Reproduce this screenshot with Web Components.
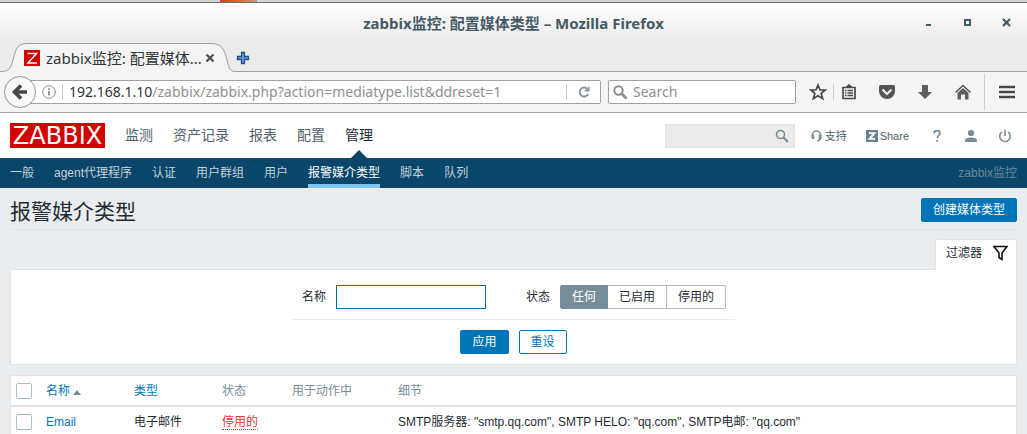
<!DOCTYPE html>
<html lang="zh-CN">
<head>
<meta charset="utf-8">
<title>zabbix监控: 配置媒体类型</title>
<style>
  html, body { margin: 0; height: 100%; overflow: hidden; }
  body { background: #e9edf0; font: 12px/18px "Liberation Sans", "Noto Sans CJK SC", sans-serif; color: #1f2c33; }
</style>
</head>
<body>
<browser-window>
  <title-bar>zabbix监控: 配置媒体类型 – Mozilla Firefox</title-bar>
  <tab-strip>zabbix监控: 配置媒体...</tab-strip>
  <nav-toolbar></nav-toolbar>
  <zbx-header></zbx-header>
  <zbx-subnav></zbx-subnav>
  <zbx-page>
    <zbx-title>报警媒介类型<zbx-button slot="action" primary>创建媒体类型</zbx-button></zbx-title>
    <zbx-filter></zbx-filter>
    <zbx-table></zbx-table>
  </zbx-page>
</browser-window>

<script>
function define(name, html) {
  const template = document.createElement('template');
  template.innerHTML = '<style>:host,*{box-sizing:border-box}svg{display:block;flex:none}button,input{font:inherit;color:inherit;margin:0}a{color:inherit;text-decoration:none}</style>' + html;
  customElements.define(name, class extends HTMLElement {
    constructor() {
      super();
      this.attachShadow({ mode: 'open' }).append(template.content.cloneNode(true));
    }
  });
}

define('browser-window', `
<style>
  :host { display: flex; flex-direction: column; min-height: 100vh; }
  .edge { height: 3px; background: #d6d6d6; border-bottom: 1px solid #6e6e6e; }
  .edge i { display: block; width: 37px; height: 2px; margin-left: 220px; background: linear-gradient(90deg, #d83a22, #e0642c 50%, #b5a08c); }
</style>
<div class="edge"><i></i></div>
<slot></slot>`);

define('title-bar', `
<style>
  :host { display: grid; grid-template-columns: 1fr auto 1fr; align-items: center; height: 40px;
    background: linear-gradient(#fff, #ebebeb 38px); color: #455a64;
    font: bold 15px/20px "Noto Sans", "Noto Sans CJK SC", sans-serif; }
  .title { grid-column: 2; }
  .controls { display: flex; justify-content: flex-end; gap: 25px; padding-right: 13px; }
  button { border: 0; background: none; padding: 0; width: 14px; height: 14px; }
</style>
<span class="title"><slot></slot></span>
<div class="controls">
  <button aria-label="Minimize"><svg width="14" height="14"><path d="M4 8h5v2H4z" fill="#455a64"/></svg></button>
  <button aria-label="Maximize"><svg width="14" height="14"><path d="M4 4h5v5H4z" fill="none" stroke="#455a64" stroke-width="2"/></svg></button>
  <button aria-label="Close"><svg width="14" height="14"><path d="M3 3l7 7M10 3l-7 7" stroke="#455a64" stroke-width="2.200"/></svg></button>
</div>`);

define('tab-strip', `
<style>
  :host { display: flex; height: 29px; background: linear-gradient(#ebebeb, #ebebeb 28px, #9f9f9f 28px); }
  .tab { position: relative; display: flex; align-items: center; width: 236px; height: 29px; padding-left: 24px; }
  .shape { position: absolute; inset: 0; }
  .tab > :not(.shape) { position: relative; }
  .fav { width: 16px; height: 16px; flex: none; }
  .text { width: 154px; margin-left: 6px; white-space: nowrap; color: #2e3436; font: 15px/20px "Noto Sans", "Noto Sans CJK SC", sans-serif; }
  button { border: 0; background: none; padding: 0; }
</style>
<div class="tab">
  <svg class="shape" width="236" height="29"><path d="M0 28.500C8 28.500 10.500 27 13 17C16 4 18 .500 28 .500H210C221 .500 224 5 227 17C229 26 230 28.500 236 28.500V29H0z" fill="#f4f4f4"/><path d="M0 28.500C8 28.500 10.500 27 13 17C16 4 18 .500 28 .500H210C221 .500 224 5 227 17C229 26 230 28.500 236 28.500" fill="none" stroke="#9aa0a6"/></svg>
  <svg class="fav" viewBox="0 0 16 16"><path d="M0 0h16v16H0z" fill="#d40000"/><path d="M3.500 3.500h9L4 13h9" fill="none" stroke="#fff" stroke-width="1.500"/></svg>
  <span class="text"><slot></slot></span>
  <button aria-label="Close Tab"><svg width="20" height="16"><path d="M6.500 4.500l7 7M13.500 4.500l-7 7" stroke="#4a4f52" stroke-width="2.200"/></svg></button>
</div>
<button aria-label="New Tab"><svg width="14" height="14"><path d="M5.500 1.500h3v4h4v3h-4v4h-3v-4h-4v-3h4z" fill="#6d9bd1" stroke="#234f91" stroke-width="1.300"/></svg></button>`);

define('nav-toolbar', `
<style>
  :host { display: flex; align-items: center; height: 41px; padding: 0 10px 0 4px; background: #f4f4f4; border-bottom: 1px solid #a3a3a3;
    font: 14px/20px "Noto Sans", sans-serif; }
  button { display: grid; place-items: center; border: 0; background: none; padding: 0; flex: none; }
  .back { width: 32px; height: 32px; border: 1px solid #989898; border-radius: 50%; background: #f8f8f8; z-index: 1; }
  .box { display: flex; align-items: center; height: 24px; background: #fff; border: 1px solid #a0a0a0; border-radius: 2px; }
  .url { flex: 1; margin-left: -7px; padding-left: 12px; }
  .url .addr { flex: 1; margin-left: 6px; white-space: nowrap; color: #8f8f8f; }
  .addr b { font-weight: normal; color: #2e3436; }
  .bar { width: 1px; height: 16px; background: #ccc; flex: none; }
  .url .bar:first-of-type { margin-left: 6px; }
  .reload { width: 33px; }
  .search { width: 188px; margin-left: 7px; padding: 0 4px; }
  .search input { flex: 1; min-width: 0; border: 0; outline: 0; padding: 0; margin-left: 5px; background: none; }
  input::placeholder { color: #8f8f8f; opacity: 1; }
  .icons { display: flex; align-items: center; margin-left: 12px; }
  .icons button { width: 20px; }
  .icons .bar { margin: 0 5px; }
  .icons .gap { margin-left: 18px; }
  .tall { width: 1px; height: 36px; margin: 0 12px 0 11px; background: #d0d0d0; }
</style>
<button class="back" aria-label="Back"><svg width="18" height="18"><path d="M10 2.500L3.500 9l6.500 6.500M4.500 9H16" fill="none" stroke="#474747" stroke-width="3.600"/></svg></button>
<div class="box url">
  <svg width="14" height="14"><circle cx="7" cy="7" r="6.300" fill="none" stroke="#8d8d8d"/><path d="M7 6v4.500M7 3.300v1.600" stroke="#777" stroke-width="1.500"/></svg>
  <span class="bar"></span>
  <span class="addr"><b>192.168.1.10</b>/zabbix/zabbix.php?action=mediatype.list&amp;ddreset=1</span>
  <span class="bar"></span>
  <button class="reload" aria-label="Reload"><svg width="14" height="14"><path d="M11.300 8.800A4.500 4.500 0 1 1 9.800 3.400" fill="none" stroke="#8796a6" stroke-width="2"/><path d="M12.500 1v5.500H7z" fill="#8796a6"/></svg></button>
</div>
<div class="box search">
  <svg width="15" height="15"><circle cx="5.500" cy="5.500" r="4.200" fill="none" stroke="#8d8d8d" stroke-width="2"/><path d="M8.500 8.500l5 5" stroke="#8d8d8d" stroke-width="2.600"/></svg>
  <input aria-label="Search" placeholder="Search">
</div>
<div class="icons">
  <button aria-label="Bookmark"><svg width="18" height="18"><path d="M9 2l2 5h5.300l-4.100 3.400 1.500 5.300L9 12.700l-4.700 3 1.500-5.300L1.700 7H7z" fill="none" stroke="#474747" stroke-width="1.700"/></svg></button>
  <span class="bar"></span>
  <button aria-label="Bookmarks list"><svg width="16" height="16"><path d="M2 3.500h12v11H2z" fill="#f4f4f4" stroke="#474747" stroke-width="1.700"/><path d="M4.500 3L8 0l3.500 3z" fill="#474747"/><path d="M4 6.500h1.500M4 9h1.500M4 11.500h1.500M6.500 6.500H12M6.500 9H12M6.500 11.500H12" stroke="#474747" stroke-width="1.400"/></svg></button>
  <button class="gap" aria-label="Pocket"><svg width="18" height="16"><path d="M2.500 1h13Q17 1 17 2.500V7a8 8 0 0 1-16 0V2.500Q1 1 2.500 1z" fill="#555"/><path d="M4.500 5.500L9 10l4.500-4.500" fill="none" stroke="#f4f4f4" stroke-width="2"/></svg></button>
  <button class="gap" aria-label="Downloads"><svg width="16" height="16"><path d="M5 1h6v7h4l-7 7-7-7h4z" fill="#5c5c5c"/></svg></button>
  <button class="gap" aria-label="Home"><svg width="18" height="16"><path d="M1.500 8.500L9 1.500l7.500 7" fill="none" stroke="#555" stroke-width="1.600"/><path d="M3.500 9L9 4l5.500 5v6.500H11v-5H7v5H3.500z" fill="#5c5c5c"/></svg></button>
  <span class="tall"></span>
  <button aria-label="Menu"><svg width="18" height="16"><path d="M1 3h16M1 8h16M1 13h16" stroke="#474747" stroke-width="2.500"/></svg></button>
</div>`);

define('zbx-header', `
<style>
  :host { display: flex; align-items: center; height: 45px; padding: 0 10px; background: #fff; color: #50616b; }
  .logo { width: 95px; height: 25px; background: #d40000; color: #fff; font: 24px/26px "DejaVu Sans", sans-serif; text-align: center; }
  nav { display: flex; gap: 20px; margin-left: 20px; font-size: 14px; line-height: 45px; }
  nav a { position: relative; }
  nav a.on { color: #1f2c33; }
  nav a.on::after { content: ""; position: absolute; left: 6px; bottom: 0; border: 8px solid transparent; border-top: 0; border-bottom-color: #0a466a; }
  .tools { display: flex; align-items: center; margin-left: auto; font-size: 11px; }
  .search { display: flex; align-items: center; width: 130px; height: 24px; padding-right: 5px; background: #ebebeb; border: 1px solid #dfe4e7; }
  .search input { flex: 1; min-width: 0; border: 0; outline: 0; background: none; }
  .search button { border: 0; padding: 0; background: none; }
  .tools a { display: flex; align-items: center; }
  .help { padding-left: 15px; gap: 2px; }
  .share { padding: 0 21px 0 19px; gap: 2px; }
  .icons { display: flex; gap: 20px; padding-right: 5px; }
</style>
<a class="logo" href="#">ZABBIX</a>
<nav><a href="#">监测</a><a href="#">资产记录</a><a href="#">报表</a><a href="#">配置</a><a href="#" class="on">管理</a></nav>
<div class="tools">
  <form class="search"><input aria-label="搜索"><button type="button" aria-label="搜索"><svg width="14" height="14"><circle cx="5.500" cy="5.500" r="4" fill="none" stroke="#768d99" stroke-width="1.600"/><path d="M8.500 8.500l4.500 4.500" stroke="#768d99" stroke-width="2"/></svg></button></form>
  <a class="help" href="#"><svg width="13" height="14"><path d="M2.500 7.500V6a4 4 0 0 1 8 0v2.500q0 3-3.500 3.500" fill="none" stroke="#768d99" stroke-width="1.500"/><path d="M1.500 5.500h2.800v4.500H2.500q-1 0-1-1zM8.700 5.500h2.800V9q0 1-1 1H8.700z" fill="#768d99"/></svg>支持</a>
  <a class="share" href="#"><svg width="12" height="12"><path d="M0 0h12v12H0z" fill="#68818e"/><path d="M3 3.200h5.500L3.500 8.800H9" fill="none" stroke="#fff" stroke-width="1.800"/></svg>Share</a>
  <div class="icons">
    <a href="#" aria-label="帮助"><svg width="14" height="14"><path d="M4 4.300q0-2.600 3-2.600t3 2.500c0 2.200-2.700 2.300-2.700 5" fill="none" stroke="#768d99" stroke-width="1.700"/><circle cx="7.200" cy="12" r="1.100" fill="#768d99"/></svg></a>
    <a href="#" aria-label="用户"><svg width="14" height="14"><circle cx="7" cy="4" r="3.100" fill="#768d99"/><path d="M1 13v-1.500Q1 8.500 7 8.500t6 3V13z" fill="#768d99"/></svg></a>
    <a href="#" aria-label="退出"><svg width="14" height="14"><path d="M4 2.800a5.300 5.300 0 1 0 6 0M7 .800v6.200" fill="none" stroke="#768d99" stroke-width="1.600"/></svg></a>
  </div>
</div>`);

define('zbx-subnav', `
<style>
  :host { display: flex; gap: 20px; height: 30px; padding: 0 10px; background: #0a466a; color: #c2d1da; line-height: 30px; }
  a.on { color: #fff; height: 30px; border-bottom: 4px solid #7cc6f5; }
  span { margin-left: auto; color: #6b8798; }
</style>
<a href="#">一般</a><a href="#">agent代理程序</a><a href="#">认证</a><a href="#">用户群组</a><a href="#">用户</a><a href="#" class="on">报警媒介类型</a><a href="#">脚本</a><a href="#">队列</a>
<span>zabbix监控</span>`);

define('zbx-page', `
<style>:host { display: block; padding: 0 10px; }</style><slot></slot>`);

define('zbx-button', `
<style>
  :host { display: block; }
  button { display: block; height: 24px; padding: 0 11px; border: 1px solid #0275b8; border-radius: 2px; background: #fff; color: #0275b8; line-height: 22px; }
  :host([primary]) button { background: #0275b8; color: #fff; }
</style>
<button type="button"><slot></slot></button>`);

define('zbx-title', `
<style>
  :host { display: flex; align-items: center; justify-content: space-between; height: 42px; padding: 4px 0 1px; border-bottom: 1px solid #dfe4e7; }
  h1 { margin: 0; padding-top: 4px; font-size: 21px; font-weight: normal; line-height: 24px; }
</style>
<h1><slot></slot></h1><slot name="action"></slot>`);

define('zbx-filter', `
<style>
  :host { display: flex; flex-direction: column; margin-top: 9px; }
  .tab { position: relative; display: flex; align-items: center; align-self: flex-end; gap: 10px; height: 31px; margin-bottom: -1px; padding: 0 8px 5px 10px; background: #fff; border: 1px solid #dfe4e7; border-bottom: 0; border-radius: 2px 2px 0 0; }
  form { display: flex; flex-direction: column; align-items: center; padding: 15px 0 10px; background: #fff; border: 1px solid #dfe4e7; }
  .fields { display: flex; align-items: center; padding: 0 9px 10px 10px; border-bottom: 1px solid #ebebeb; }
  .text { width: 150px; height: 24px; margin: 0 40px 0 10px; border: 1px solid #03689f; padding: 0 4px; outline: 0; }
  .seg { display: flex; margin: 0 0 0 10px; padding: 0; border: 0; }
  .seg input { position: absolute; opacity: 0; width: 1px; height: 1px; }
  .seg label { height: 24px; padding: 0 11px; border: 1px solid #acbbc2; border-left-width: 0; line-height: 22px; }
  .seg label:first-of-type { border-left-width: 1px; border-radius: 2px 0 0 2px; }
  .seg label:last-of-type { border-radius: 0 2px 2px 0; }
  .seg input:checked + label { background: #768d99; border-color: #768d99; color: #fff; }
  .actions { display: flex; gap: 10px; padding-top: 10px; }
</style>
<a class="tab" href="#">过滤器<svg width="16" height="16"><path d="M2 1.500h13L10 8v6.500L7 12.500V8z" fill="none" stroke="#111" stroke-width="1.600"/></svg></a>
<form>
  <div class="fields">
    <label for="name">名称</label><input class="text" id="name" type="text">
    <span id="st">状态</span>
    <div class="seg" role="radiogroup" aria-labelledby="st">
      <input type="radio" name="s" id="s0" checked><label for="s0">任何</label>
      <input type="radio" name="s" id="s1"><label for="s1">已启用</label>
      <input type="radio" name="s" id="s2"><label for="s2">停用的</label>
    </div>
  </div>
  <div class="actions"><zbx-button primary>应用</zbx-button><zbx-button>重设</zbx-button></div>
</form>`);

define('zbx-table', `
<style>
  :host { display: block; margin-top: 10px; background: #fff; border: 1px solid #dfe4e7; }
  table { width: 100%; border-collapse: collapse; table-layout: fixed; }
  th, td { height: 30px; padding: 0 5px; text-align: left; font-weight: normal; }
  th { color: #768d99; border-bottom: 2px solid #dfe4e7; }
  .c { width: 30px; } .n { width: 88px; } .s { width: 70px; } .u { width: 106px; }
  th a, td a { color: #0275b8; }
  input { display: block; appearance: none; width: 16px; height: 16px; border: 1px solid #acbbc2; border-radius: 2px; background: #fff; }
  .arrow { display: inline-block; margin-left: 3px; border: 4px solid transparent; border-top: 0; border-bottom: 5px solid #768d99; }
  td a.off { color: #e33734; border-bottom: 1px dotted #e33734; }
</style>
<table>
  <thead><tr><th class="c"><input type="checkbox" aria-label="全选"></th><th class="n"><a href="#">名称<span class="arrow"></span></a></th><th class="n"><a href="#">类型</a></th><th class="s">状态</th><th class="u">用于动作中</th><th>细节</th></tr></thead>
  <tbody><tr><td><input type="checkbox" aria-label="Email"></td><td><a href="#">Email</a></td><td>电子邮件</td><td><a class="off" href="#">停用的</a></td><td></td><td>SMTP服务器: "smtp.qq.com", SMTP HELO: "qq.com", SMTP电邮: "qq.com"</td></tr></tbody>
</table>`);
</script>
</body>
</html>
